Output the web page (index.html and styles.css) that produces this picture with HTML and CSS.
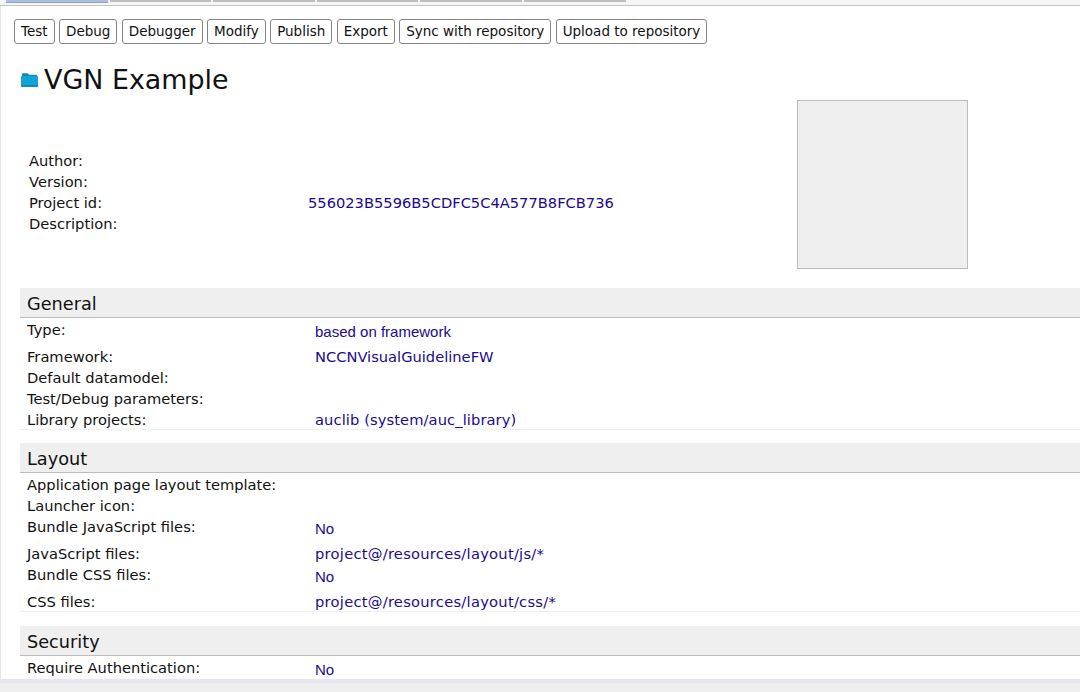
FILE: index.html
```html
<!DOCTYPE html>
<html lang="en">
<head>
    <meta charset="UTF-8">
    <meta name="viewport" content="width=device-width, initial-scale=1.0">
    <title>VGN Example</title>
    <link rel="stylesheet" href="styles.css">
</head>
<body>

    <div class="tab-strip">
        <span class="tab active"></span>
        <span class="tab"></span>
        <span class="tab"></span>
        <span class="tab"></span>
        <span class="tab"></span>
        <span class="tab"></span>
    </div>

    <div class="page">
        <div class="toolbar">
            <button class="tool-button">Test</button>
            <button class="tool-button">Debug</button>
            <button class="tool-button">Debugger</button>
            <button class="tool-button">Modify</button>
            <button class="tool-button">Publish</button>
            <button class="tool-button">Export</button>
            <button class="tool-button">Sync with repository</button>
            <button class="tool-button">Upload to repository</button>
        </div>

        <h1 class="project-title">
            <svg class="folder-icon" width="17" height="14" viewBox="0 0 17 14">
                <path d="M1 1.2 Q1 .3 2 .3 H6.5 L8 1.8 H15 Q16 1.8 16 2.8 V4 H1 Z" fill="#0b86b8"/>
                <path d="M0 3.8 Q0 2.9 1 2.9 H16 Q17 2.9 17 3.8 V13 Q17 14 16 14 H1 Q0 14 0 13 Z" fill="#12a3da"/>
                <rect x="0" y="12" width="17" height="1.5" fill="#0b86b8"/>
            </svg>
            VGN Example
        </h1>

        <div class="summary">
            <div class="summary-rows">
                <div class="summary-row"><span class="summary-label">Author:</span></div>
                <div class="summary-row"><span class="summary-label">Version:</span></div>
                <div class="summary-row"><span class="summary-label">Project id:</span><span class="value">556023B5596B5CDFC5C4A577B8FCB736</span></div>
                <div class="summary-row"><span class="summary-label">Description:</span></div>
            </div>
            <div class="thumbnail"></div>
        </div>

        <section class="group">
            <h2 class="group-title">General</h2>
            <div class="row tall"><span class="label">Type:</span><span class="value small">based on framework</span></div>
            <div class="row"><span class="label">Framework:</span><span class="value">NCCNVisualGuidelineFW</span></div>
            <div class="row"><span class="label">Default datamodel:</span></div>
            <div class="row"><span class="label">Test/Debug parameters:</span></div>
            <div class="row"><span class="label">Library projects:</span><span class="value lib">auclib (system/auc_library)</span></div>
        </section>

        <section class="group">
            <h2 class="group-title">Layout</h2>
            <div class="row"><span class="label">Application page layout template:</span></div>
            <div class="row"><span class="label">Launcher icon:</span></div>
            <div class="row tall"><span class="label">Bundle JavaScript files:</span><span class="value small">No</span></div>
            <div class="row"><span class="label">JavaScript files:</span><span class="value path">project@/resources/layout/js/*</span></div>
            <div class="row tall"><span class="label">Bundle CSS files:</span><span class="value small">No</span></div>
            <div class="row"><span class="label">CSS files:</span><span class="value path">project@/resources/layout/css/*</span></div>
        </section>

        <section class="group">
            <h2 class="group-title">Security</h2>
            <div class="row tall"><span class="label">Require Authentication:</span><span class="value small">No</span></div>
        </section>
    </div>

    <div class="bottom-bar"></div>

</body>
</html>
```

FILE: styles.css
```css
html, body {
    height: 100%;
}

body {
    margin: 0;
    background-color: #fff;
    font-family: "DejaVu Sans", sans-serif;
    font-size: 14.67px;
    color: #111;
    display: flex;
    flex-direction: column;
    overflow: hidden;
}

.tab-strip {
    display: flex;
    gap: 2px;
    height: 5px;
    padding-left: 6px;
    background-color: #f5f5f5;
    border-bottom: 1px solid #c4c4c4;
    flex: none;
}

.tab {
    width: 101.6px;
    height: 2px;
    background-color: #bdbdbd;
}

.tab.active {
    background-color: #aebfdc;
    border-bottom: 1px solid #8f9fbe;
}

.page {
    flex: 1;
    min-height: 0;
    overflow: hidden;
    padding: 13px 0 0 19px;
    border-left: 1px solid #e6e6f0;
}

.toolbar {
    display: flex;
    gap: 4.4px;
    margin-left: -6px;
}

.tool-button {
    height: 25px;
    padding: 0 6px 1px;
    background-color: #fff;
    border: 1px solid #858585;
    border-radius: 3px;
    font-family: inherit;
    font-size: 13.5px;
    color: #111;
}

.project-title {
    display: flex;
    align-items: center;
    gap: 6px;
    margin: 18px 0 0 1px;
    font-size: 26.9px;
    font-weight: normal;
    line-height: 36px;
}

.summary {
    display: flex;
    margin-top: 2px;
    height: 188px;
}

.summary-rows {
    width: 777px;
    padding: 50px 0 0 9px;
    box-sizing: border-box;
}

.summary-row {
    display: flex;
    height: 21px;
    line-height: 21px;
}

.summary-label {
    width: 279px;
}

.thumbnail {
    width: 169px;
    height: 167px;
    background-color: #efefef;
    border: 1px solid #bcbcbc;
}

.group {
    margin-bottom: 13px;
    border-bottom: 1px solid #efefef;
}

.group + .group {
    margin-bottom: 14px;
}

.group-title {
    margin: 0;
    height: 29px;
    padding-left: 7px;
    background-color: #efefef;
    border-bottom: 1px solid #bcbcbc;
    font-size: 17.7px;
    font-weight: normal;
    line-height: 32px;
}

.row {
    display: flex;
    height: 21px;
    line-height: 24px;
    padding-left: 7px;
}

.row.tall {
    height: 27px;
}

.label {
    width: 288px;
    flex: none;
}

.value {
    color: #220a8c;
}

.value.small {
    padding-top: 2px;
    font-family: "Liberation Sans", sans-serif;
    font-size: 15px;
}

.value.path {
    letter-spacing: 0.27px;
}

.value.lib {
    letter-spacing: 0.1px;
}

.bottom-bar {
    flex: none;
    height: 13px;
    background-color: #efefef;
    border-top: 4px solid #e6e6f0;
    box-sizing: border-box;
}
```
